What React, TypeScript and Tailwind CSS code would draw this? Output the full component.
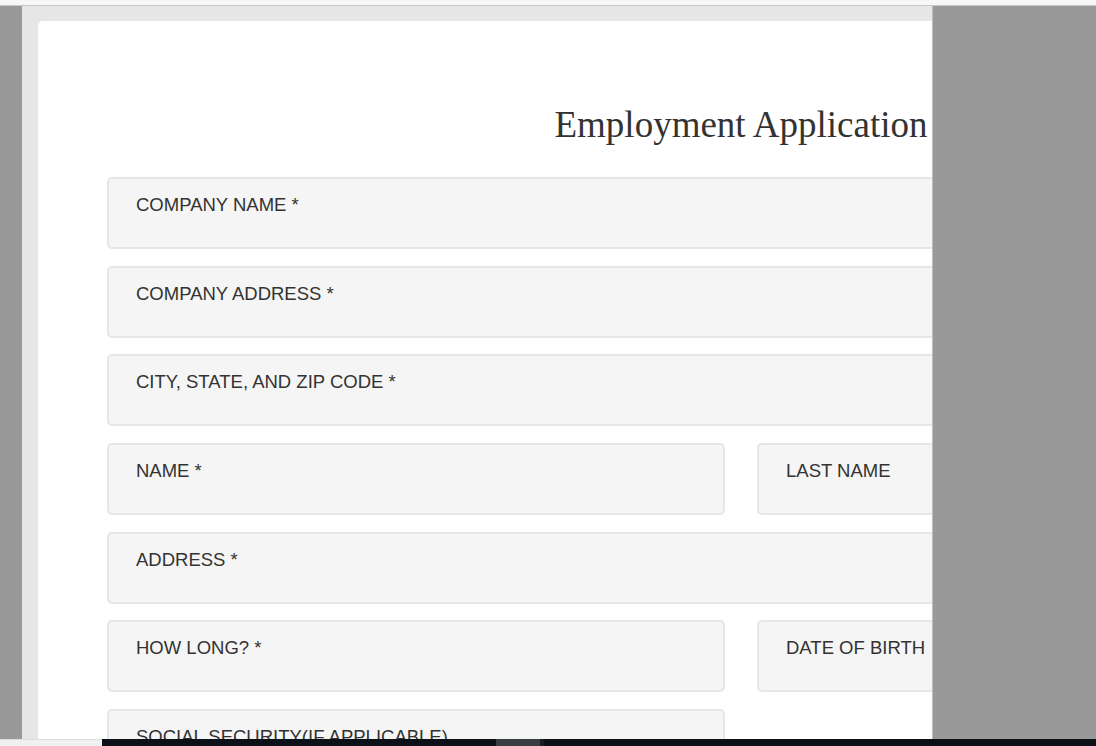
import React from "react";

type Field = { label: string; full?: boolean };

const fields: Field[] = [
  { label: "COMPANY NAME *", full: true },
  { label: "COMPANY ADDRESS *", full: true },
  { label: "CITY, STATE, AND ZIP CODE *", full: true },
  { label: "NAME *" },
  { label: "LAST NAME" },
  { label: "ADDRESS *", full: true },
  { label: "HOW LONG? *" },
  { label: "DATE OF BIRTH" },
  { label: "SOCIAL SECURITY(IF APPLICABLE)" },
];

function FieldBox({ f }: { f: Field }) {
  return (
    <div
      className={
        (f.full ? "col-span-2 " : "") +
        "h-[72px] rounded-[5px] border-2 border-[#e6e6e6] bg-[#f5f5f5] pl-[27px] pt-[16px]"
      }
    >
      <div className="text-[18.5px] leading-[20px] text-[#333333] font-['Liberation_Sans',Arial,sans-serif] whitespace-nowrap">
        {f.label}
      </div>
    </div>
  );
}

export default function App() {
  return (
    <div className="w-[1096px] h-[746px] overflow-hidden flex flex-col bg-white">
      <div className="h-[6px] shrink-0 bg-[#f7f7f7] border-b border-[#c8c8c8]" />
      <div className="flex-1 flex min-h-0">
        <div className="w-[22px] shrink-0 bg-[#999999]" />
        <div className="w-[910px] shrink-0 bg-[#e6e6e6] pl-[16px] pt-[15px] overflow-hidden">
          <div className="w-[1406px] min-h-[800px] bg-white rounded-[5px] px-[69px] pt-[86px]">
            <h1 className="text-center text-[37px] leading-[36px] h-[36px] text-[#333333] font-['Liberation_Serif','Times_New_Roman',serif] mb-[34px]">
              Employment Application
            </h1>
            <div className="grid grid-cols-2 gap-x-[32px] gap-y-[16.67px]">
              {fields.map((f) => (
                <FieldBox key={f.label} f={f} />
              ))}
            </div>
          </div>
        </div>
        <div className="flex-1 bg-[#999999] border-l border-[#bdbdbd]" />
      </div>
      <div className="h-[7px] shrink-0 flex">
        <div className="w-[102px] bg-[#f0f0f0] border-t border-[#dcdcdc]" />
        <div className="w-[394px] bg-[#0c1118]" />
        <div className="w-[44px] bg-[#3a3d42]" />
        <div className="w-[4px] bg-[#1c1f24]" />
        <div className="flex-1 bg-[#0c1118]" />
      </div>
    </div>
  );
}
